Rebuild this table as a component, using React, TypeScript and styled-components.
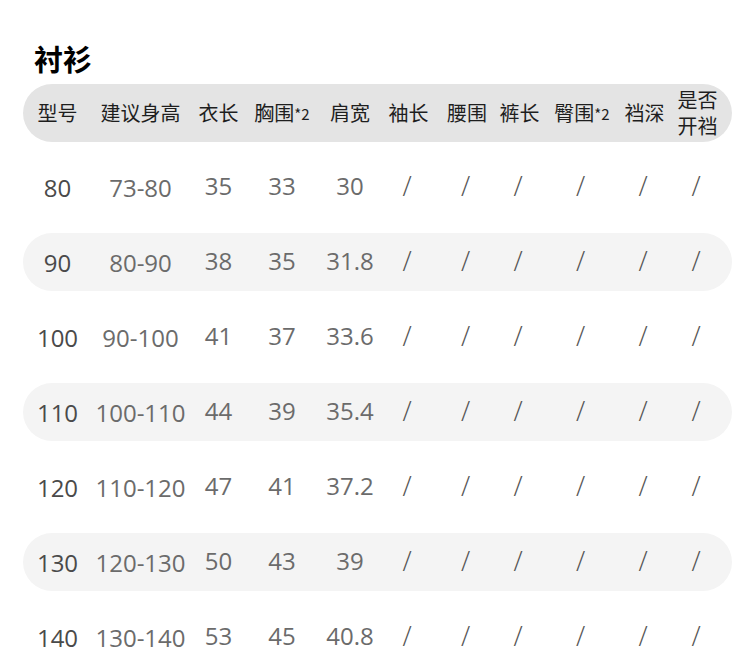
import React from "react";
import styled, { createGlobalStyle } from "styled-components";

const GlobalStyle = createGlobalStyle`
  html, body { margin: 0; padding: 0; background: #ffffff; }
  body { font-family: "Noto Sans CJK SC", "Noto Sans", sans-serif; }
`;

const COLS = "69px 97px 59px 68px 68px 49px 68px 37px 88px 37px 69px";

const Page = styled.div`
  width: 750px;
  height: 670px;
  padding: 0 18px 0 23px;
  box-sizing: border-box;
  overflow: hidden;
`;

const Title = styled.h1`
  margin: 38px 0 6px 11px;
  height: 40px;
  line-height: 40px;
  font-size: 29px;
  font-weight: 700;
  color: #000;
  font-family: "Noto Sans CJK SC", sans-serif;
`;

const HeaderBar = styled.div`
  display: grid;
  grid-template-columns: ${COLS};
  height: 58px;
  border-radius: 29px;
  background: #e4e4e4;
`;

const HeadCell = styled.div`
  display: flex;
  justify-content: center;
  align-items: center;
  white-space: nowrap;
  font-size: 20px;
  color: #1e1e1e;
  font-family: "Noto Sans CJK SC", sans-serif;
  line-height: 26px;
  text-align: center;
`;

const Small = styled.span`
  font-size: 15px;
  align-self: center;
  padding-top: 2px;
`;

const TwoLine = styled.span`
  display: block;
  line-height: 26px;
  margin-top: -1px;
`;

const Body = styled.div`
  display: flex;
  flex-direction: column;
  gap: 17px;
  margin-top: 16px;
`;

const Row = styled.div<{ $striped: boolean }>`
  display: grid;
  grid-template-columns: ${COLS};
  height: 58px;
  border-radius: 29px;
  background: ${(p) => (p.$striped ? "#f4f4f4" : "transparent")};
`;

const Cell = styled.div<{ $lead?: boolean; $lift?: boolean }>`
  display: flex;
  justify-content: center;
  align-items: center;
  white-space: nowrap;
  font-family: "Open Sans", "Noto Sans", sans-serif;
  font-size: 24px;
  color: ${(p) => (p.$lead ? "#4a4a4a" : "#6b6b6b")};
  padding-bottom: ${(p) => (p.$lift ? "4px" : "0")};
`;

const Slash = styled.span`
  color: #555;
  font-size: 27px;
  font-weight: 300;
  margin-right: 3px;
`;

const headers: React.ReactNode[] = [
  "型号",
  "建议身高",
  "衣长",
  <>胸围<Small>*2</Small></>,
  "肩宽",
  "袖长",
  "腰围",
  "裤长",
  <>臀围<Small>*2</Small></>,
  "裆深",
  <TwoLine>是否<br />开裆</TwoLine>,
];

const rows: string[][] = [
  ["80", "73-80", "35", "33", "30"],
  ["90", "80-90", "38", "35", "31.8"],
  ["100", "90-100", "41", "37", "33.6"],
  ["110", "100-110", "44", "39", "35.4"],
  ["120", "110-120", "47", "41", "37.2"],
  ["130", "120-130", "50", "43", "39"],
  ["140", "130-140", "53", "45", "40.8"],
];

export default function App() {
  return (
    <>
      <GlobalStyle />
      <Page>
        <Title>衬衫</Title>
        <HeaderBar>
          {headers.map((h, i) => (
            <HeadCell key={i}>{h}</HeadCell>
          ))}
        </HeaderBar>
        <Body>
          {rows.map((r, ri) => (
            <Row key={ri} $striped={ri % 2 === 1}>
              {r.map((v, ci) => (
                <Cell key={ci} $lead={ci === 0} $lift={ci >= 2}>
                  {v}
                </Cell>
              ))}
              {Array.from({ length: 6 }).map((_, k) => (
                <Cell key={"s" + k} $lift>
                  <Slash>/</Slash>
                </Cell>
              ))}
            </Row>
          ))}
        </Body>
      </Page>
    </>
  );
}
